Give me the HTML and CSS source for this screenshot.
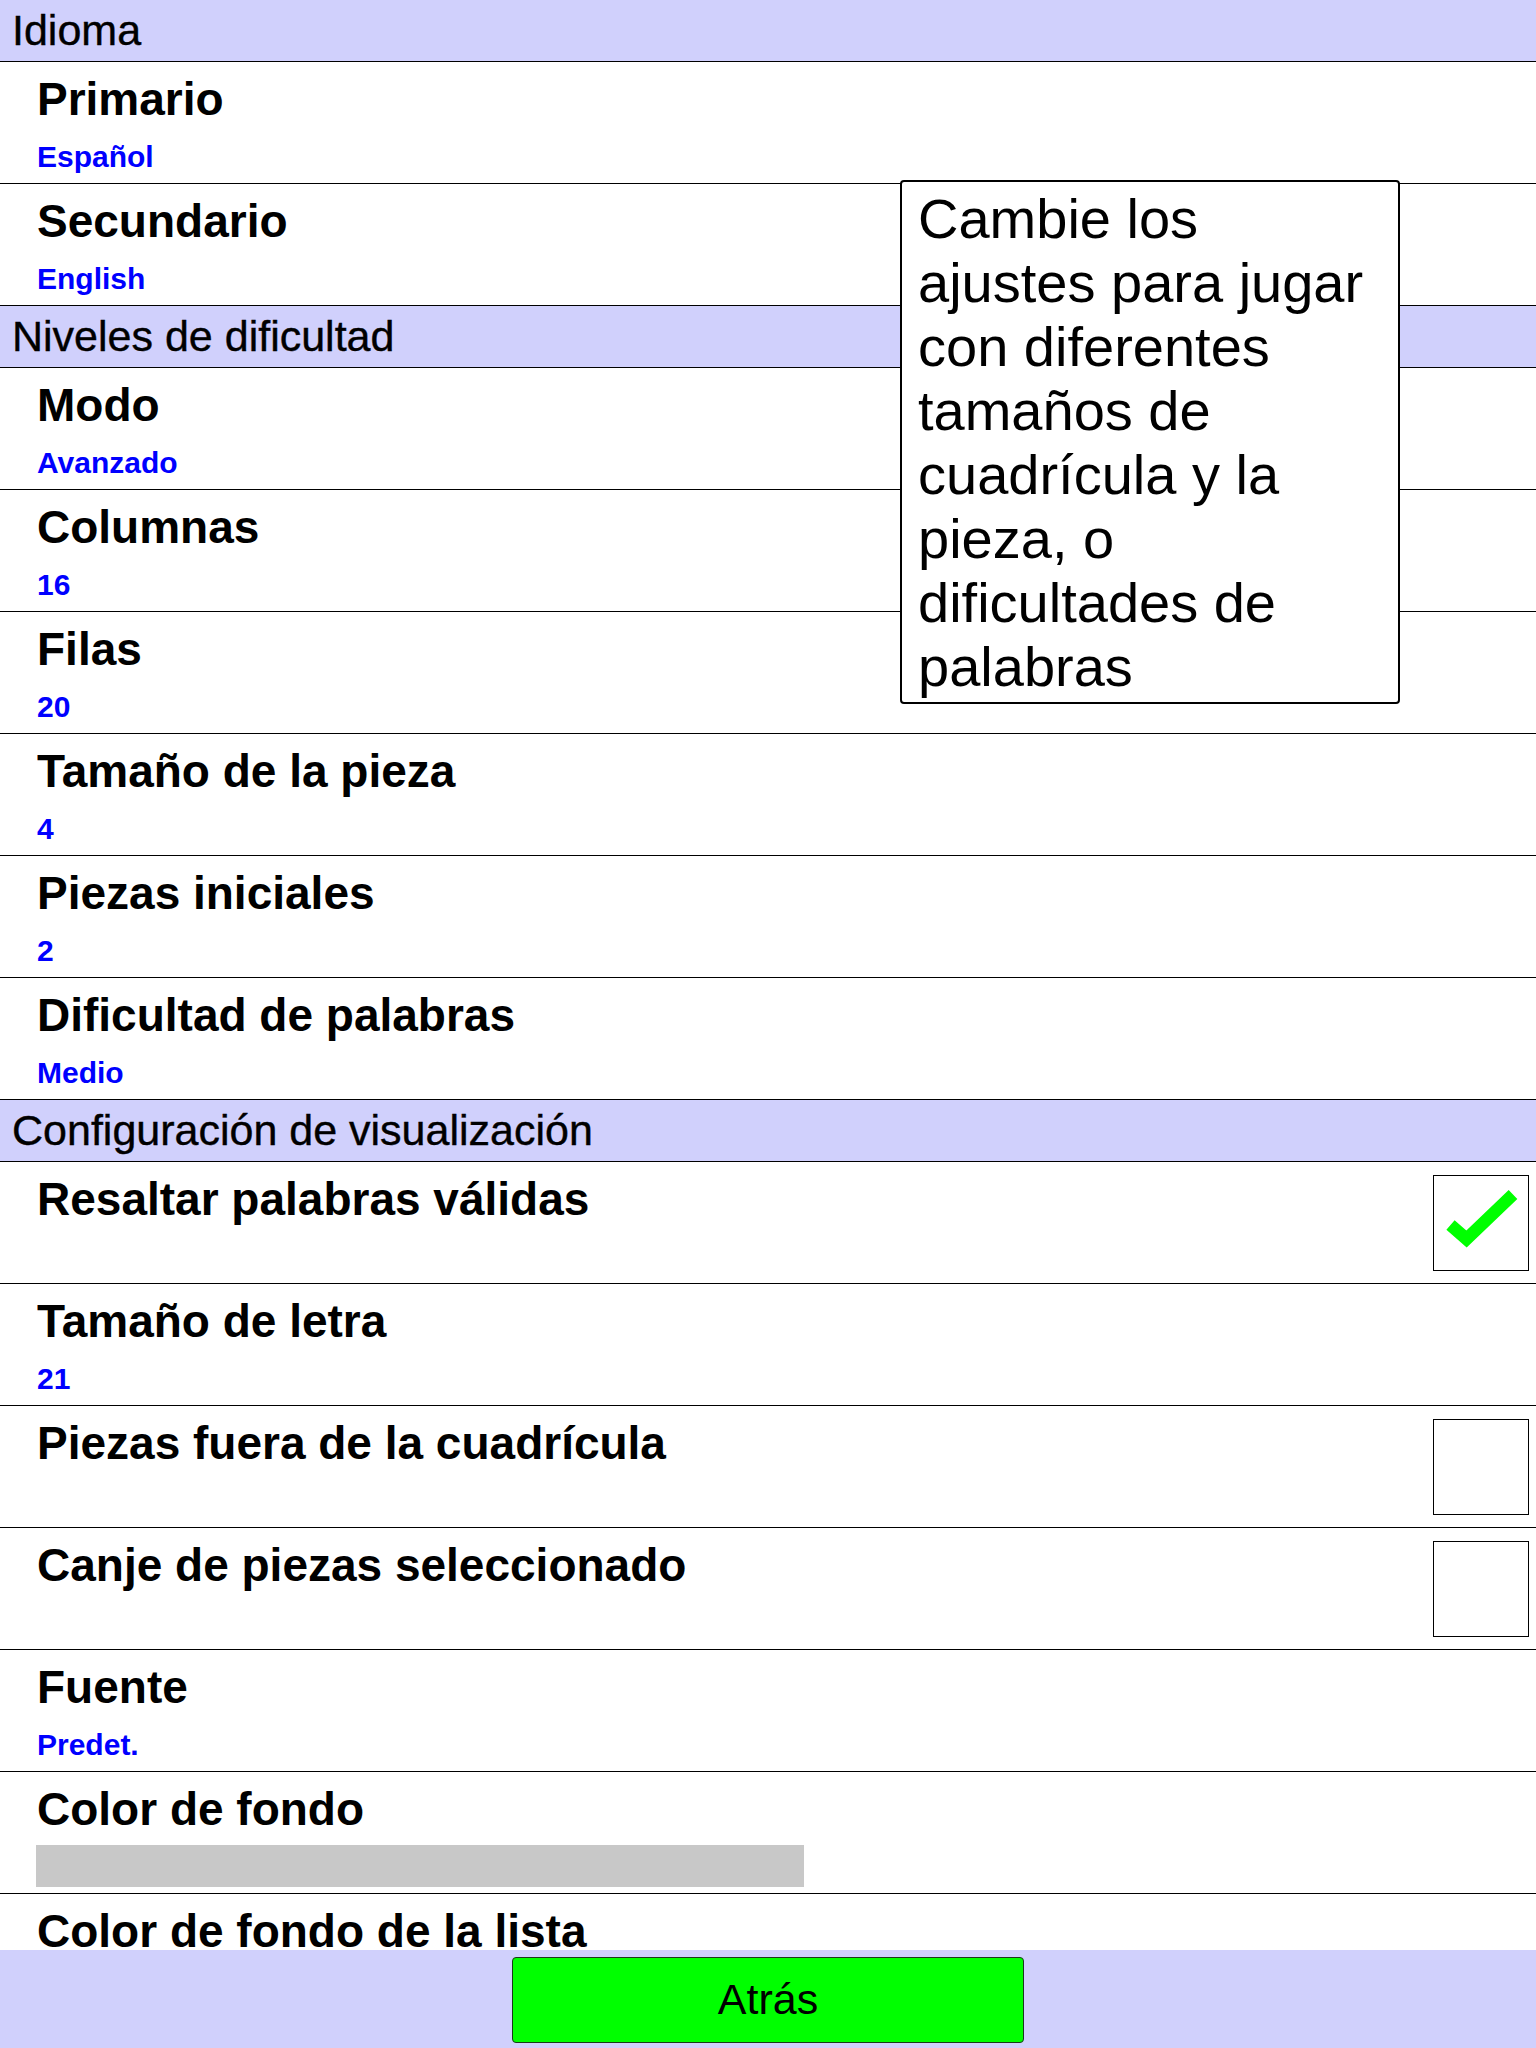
FILE: index.html
```html
<!DOCTYPE html>
<html lang="es">
<head>
<meta charset="utf-8">
<title>Ajustes</title>
<link rel="stylesheet" href="styles.css">
</head>
<body>
<div class="screen">
  <div class="list">
    <div class="section">Idioma</div>
    <div class="row"><div class="text"><div class="title">Primario</div><div class="value">Español</div></div></div>
    <div class="row"><div class="text"><div class="title">Secundario</div><div class="value">English</div></div></div>

    <div class="section">Niveles de dificultad</div>
    <div class="row"><div class="text"><div class="title">Modo</div><div class="value">Avanzado</div></div></div>
    <div class="row"><div class="text"><div class="title">Columnas</div><div class="value">16</div></div></div>
    <div class="row"><div class="text"><div class="title">Filas</div><div class="value">20</div></div></div>
    <div class="row"><div class="text"><div class="title">Tamaño de la pieza</div><div class="value">4</div></div></div>
    <div class="row"><div class="text"><div class="title">Piezas iniciales</div><div class="value">2</div></div></div>
    <div class="row"><div class="text"><div class="title">Dificultad de palabras</div><div class="value">Medio</div></div></div>

    <div class="section">Configuración de visualización</div>
    <div class="row">
      <div class="text"><div class="title">Resaltar palabras válidas</div></div>
      <div class="check">
        <svg viewBox="0 0 94 94" width="94" height="94"><polyline points="16.5,49 32.5,63 79,18.5" fill="none" stroke="#00ff00" stroke-width="12.5" stroke-linejoin="miter"/></svg>
      </div>
    </div>
    <div class="row"><div class="text"><div class="title">Tamaño de letra</div><div class="value">21</div></div></div>
    <div class="row">
      <div class="text"><div class="title">Piezas fuera de la cuadrícula</div></div>
      <div class="check"></div>
    </div>
    <div class="row">
      <div class="text"><div class="title">Canje de piezas seleccionado</div></div>
      <div class="check"></div>
    </div>
    <div class="row"><div class="text"><div class="title">Fuente</div><div class="value">Predet.</div></div></div>
    <div class="row"><div class="text"><div class="title">Color de fondo</div><div class="swatch"></div></div></div>
    <div class="row"><div class="text"><div class="title">Color de fondo de la lista</div></div></div>
  </div>
  <div class="bottombar">
    <button class="back">Atrás</button>
  </div>
  <div class="tooltip">Cambie los<br>ajustes para jugar<br>con diferentes<br>tamaños de<br>cuadrícula y la<br>pieza, o<br>dificultades de<br>palabras</div>
</div>
</body>
</html>
```

FILE: styles.css
```css
html, body {
  margin: 0;
  padding: 0;
  background: #ffffff;
}

body {
  font-family: "Liberation Sans", Arial, sans-serif;
  color: #000;
}

.screen {
  position: relative;
  width: 1536px;
  height: 2048px;
  display: flex;
  flex-direction: column;
  overflow: hidden;
}

.list {
  height: 1950px;
  overflow: hidden;
  flex: none;
}

.section {
  height: 62px;
  box-sizing: border-box;
  border-bottom: 1px solid #000;
  background: #d0d0fc;
  font-size: 43px;
  line-height: 61px;
  padding-left: 12px;
  -webkit-text-stroke: 0.4px #000;
}

.row {
  height: 122px;
  box-sizing: border-box;
  border-bottom: 1px solid #000;
  display: flex;
  justify-content: space-between;
  align-items: flex-start;
  background: #fff;
}

.text {
  padding: 11px 0 0 37px;
}

.title {
  font-size: 46px;
  font-weight: bold;
  line-height: 53px;
  white-space: nowrap;
}

.value {
  margin-top: 13px;
  font-size: 30px;
  font-weight: bold;
  line-height: 36px;
  color: #0000ff;
}

.swatch {
  margin: 9px 0 0 -1px;
  width: 768px;
  height: 42px;
  background: #c8c8c8;
}

.check {
  width: 96px;
  height: 96px;
  box-sizing: border-box;
  border: 1px solid #000;
  margin: 13px 7px 0 0;
  flex: none;
}

.check svg {
  display: block;
}

.bottombar {
  height: 98px;
  background: #d0d0fc;
  display: flex;
  align-items: center;
  justify-content: center;
}

.back {
  width: 512px;
  height: 86px;
  box-sizing: border-box;
  background: #00ff00;
  border: 1px solid #1a3a1a;
  border-radius: 4px;
  font-family: "Liberation Sans", Arial, sans-serif;
  font-size: 43px;
  color: #000;
  padding: 0;
  margin-top: 1px;
}

.tooltip {
  position: absolute;
  left: 900px;
  top: 180px;
  width: 500px;
  height: 524px;
  box-sizing: border-box;
  border: 2px solid #000;
  border-radius: 4px;
  background: #fff;
  padding: 5px 16px 0 16px;
  font-size: 56px;
  line-height: 64px;
  white-space: nowrap;
}
```
